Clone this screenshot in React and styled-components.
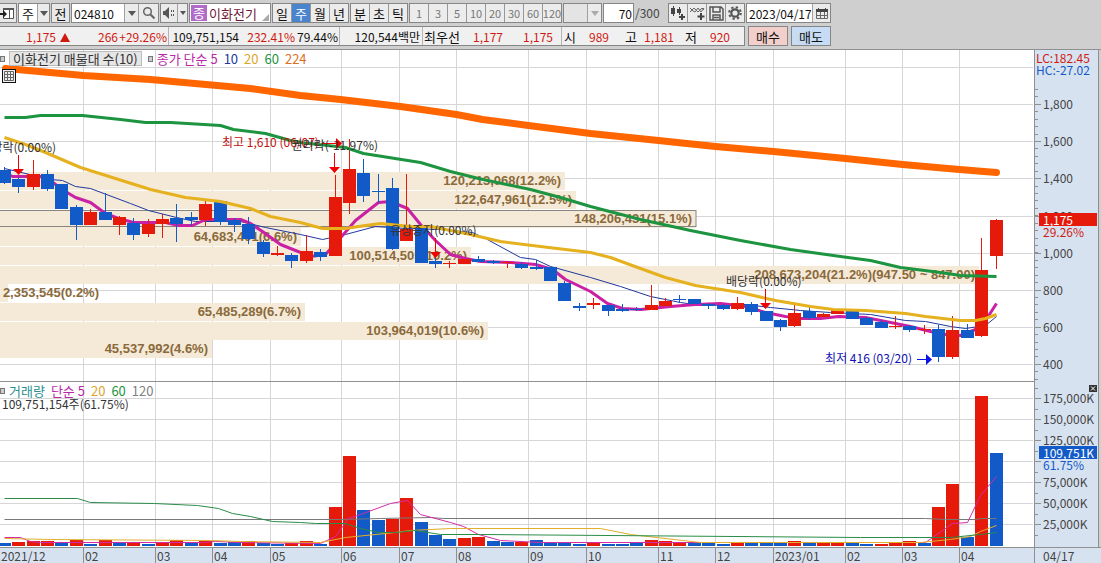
import styled, { createGlobalStyle } from "styled-components";

const RED = "#e61a0a";
const BLUE = "#125ac8";

// one entry per week: [high, body top, body bottom, low, up?]
const candles = [
  [167, 170, 183, 184, 0], [177, 179, 187, 193, 0], [160, 174, 187, 190, 1], [170, 174, 189, 191, 0],
  [184, 184, 209, 209, 0], [205, 207, 225, 240, 0], [209, 212, 225, 225, 1], [193, 212, 220, 220, 0],
  [216, 217, 225, 235, 1], [218, 223, 235, 240, 0], [219, 224, 234, 237, 1], [214, 219, 224, 238, 1],
  [204, 218, 224, 242, 0], [212, 217, 220, 226, 0], [200, 204, 220, 226, 1], [201, 201, 222, 225, 0],
  [218, 220, 225, 232, 0], [217, 224, 239, 244, 0], [240, 242, 254, 257, 0], [246, 253, 255, 256, 1],
  [253, 255, 261, 268, 0], [235, 251, 261, 263, 1], [249, 252, 257, 261, 0], [175, 197, 256, 256, 1],
  [139, 169, 203, 214, 1], [159, 173, 196, 202, 0], [174, 191, 192, 203, 0], [178, 188, 249, 250, 0],
  [174, 229, 241, 241, 1], [228, 228, 263, 263, 0], [250, 261, 264, 268, 0], [261, 263, 264, 268, 1],
  [259, 259, 264, 264, 1], [256, 259, 262, 262, 0], [260, 261, 263, 264, 0], [261, 262, 263, 268, 1],
  [262, 264, 268, 269, 0], [260, 267, 269, 270, 0], [267, 267, 281, 281, 0], [281, 283, 301, 301, 0],
  [303, 306, 308, 311, 0], [298, 303, 305, 309, 1], [305, 305, 311, 316, 0], [304, 309, 311, 312, 0],
  [307, 309, 310, 311, 0], [285, 305, 310, 310, 1], [298, 301, 306, 306, 1], [295, 299, 300, 303, 0],
  [299, 299, 304, 304, 0], [303, 304, 306, 309, 0], [304, 305, 309, 310, 0], [297, 303, 309, 310, 1],
  [302, 304, 312, 315, 0], [311, 311, 321, 321, 0], [319, 320, 327, 331, 0], [304, 313, 326, 327, 1],
  [305, 311, 318, 320, 0], [313, 314, 317, 317, 1], [310, 310, 314, 314, 1], [310, 310, 319, 319, 0],
  [317, 318, 325, 325, 0], [320, 322, 328, 328, 0], [316, 326, 327, 329, 1], [325, 326, 330, 332, 0],
  [325, 329, 330, 334, 1], [325, 329, 357, 362, 0], [316, 330, 357, 359, 1], [324, 330, 338, 338, 0],
  [238, 270, 336, 337, 1], [219, 220, 256, 269, 1],
];

// [bar top, up?]
const volumes = [
  [543, 0], [542, 1], [541, 1], [541, 1], [543, 0], [540, 1], [544, 0], [540, 1], [543, 0], [542, 1],
  [544, 0], [543, 1], [540, 1], [543, 0], [541, 1], [543, 0], [542, 0], [541, 1], [543, 0], [544, 0],
  [543, 1], [541, 1], [544, 0], [507, 1], [456, 1], [510, 0], [520, 0], [519, 1], [498, 1], [522, 0],
  [535, 0], [539, 0], [538, 1], [537, 1], [541, 0], [542, 0], [542, 1], [540, 0], [543, 0], [543, 0],
  [544, 0], [543, 1], [544, 0], [544, 0], [543, 0], [540, 1], [541, 1], [542, 1], [543, 0], [543, 0],
  [544, 0], [542, 1], [543, 0], [543, 0], [543, 0], [541, 1], [543, 0], [543, 1], [542, 1], [543, 0],
  [544, 0], [544, 1], [543, 1], [541, 1], [543, 0], [507, 1], [484, 1], [537, 0], [396, 1], [453, 0],
];

const priceLines = [
  { color: "#ff6600", width: 7, points: "5,68 83,75 150,79 250,88 300,95 340,99 400,106 456,114 482,119 528,125 590,133 658,140 715,146 773,151 845,158 902,164 959,169 996,172" },
  { color: "#2038a0", width: 1, points: "4,168 50,179 62,180 75,186 90,188 130,203 148,210 176,217 195,221 240,221 265,227 300,234 322,239 345,234 375,226 405,228 440,229 472,232 485,238 520,257 535,259 550,266 590,277 620,286 650,296 680,302 700,305 745,304 770,307 800,310 830,312 870,314 905,320 925,321 950,326 965,328 985,325 996,316" },
  { color: "#c920a4", width: 3, points: "4,172 12,176 40,176 50,180 60,188 75,197 90,202 105,213 118,218 133,222 165,222 178,225 192,225 205,219 240,219 250,223 262,231 280,244 295,250 310,256 325,254 342,235 355,220 378,202 390,201 407,208 420,224 435,240 450,254 465,258 480,261 510,262 535,264 552,269 565,279 590,291 607,303 622,308 640,309 670,306 695,304 720,303 745,306 765,312 785,316 800,318 820,318 838,316 865,317 885,321 910,326 930,331 945,334 960,335 975,329 985,320 996,303" },
  { color: "#e6b11e", width: 3, points: "4,137 25,144 45,152 80,167 115,178 150,189 185,197 220,201 250,208 270,216 300,222 322,228 345,228 365,225 380,223 410,226 430,226 470,234 500,241 540,246 590,252 610,257 640,268 665,277 695,285 740,292 775,300 810,306 833,309 865,310 905,313 925,316 960,320 975,320 985,318 996,314" },
  { color: "#1c9440", width: 3, points: "4,117 25,117 40,115 82,115 120,119 145,122 170,122 220,125 233,129 265,133 290,140 300,142 345,147 363,153 420,162 450,171 478,178 530,189 560,197 590,206 640,219 690,230 740,240 790,249 840,256 870,260 900,267 940,272 960,275 996,276" },
];

const volumeLines = [
  { color: "#787878", points: "4,519 340,519 380,518 430,517 443,518 925,518 945,519 975,519 980,518 996,518" },
  { color: "#d42ca8", points: "4,537 20,537 30,541 40,542 200,542 215,541 240,542 320,543 335,536 348,518 360,514 390,503 407,500 420,514 450,522 463,526 478,534 500,540 540,542 925,542 952,523 967,522 980,495 996,476" },
  { color: "#e2ae2c", points: "4,538 50,539 210,540 240,541 320,542 345,537 395,532 410,530 450,528 600,528 630,534 700,542 920,542 950,539 970,536 980,531 996,525" },
  { color: "#2a8c48", points: "4,498 77,498 90,502 154,503 197,505 218,508 232,513 250,516 272,521 300,522 315,523 345,523 360,528 378,532 395,532 415,530 440,534 480,534 860,537 950,537 980,534 996,532" },
];

const profile = [
  { y: 172, w: 565, text: "120,213,068(12.2%)" },
  { y: 191, w: 576, text: "122,647,961(12.5%)" },
  { y: 210, w: 696, text: "148,206,431(15.1%)", current: true },
  { y: 228, w: 301, text: "64,683,401(6.6%)" },
  { y: 247, w: 471, text: "100,514,505(10.2%)" },
  { y: 266, w: 979, text: "208,673,204(21.2%)(947.50 ~ 847.00)" },
  { y: 284, w: 8, text: "2,353,545(0.2%)" },
  { y: 303, w: 305, text: "65,485,289(6.7%)" },
  { y: 322, w: 488, text: "103,964,019(10.6%)" },
  { y: 340, w: 212, text: "45,537,992(4.6%)" },
];

const months = [
  ["2021/12", 83], ["02", 72], ["03", 57], ["04", 58], ["05", 71], ["06", 58], ["07", 57], ["08", 72],
  ["09", 58], ["10", 72], ["11", 57], ["12", 58], ["2023/01", 72], ["02", 57], ["03", 57], ["04", 75],
];
const gridX = [83, 155, 212, 270, 341, 399, 456, 528, 586, 658, 715, 773, 845, 902, 959];
const priceTicks = [[104, "1,800"], [141, "1,600"], [178, "1,400"], [216, "1,200"], [253, "1,000"], [290, "800"], [327, "600"], [364, "400"]];
const volumeTicks = [[398, "175,000K"], [419, "150,000K"], [440, "125,000K"], [461, ""], [482, "75,000K"], [503, "50,000K"], [524, "25,000K"]];

const centerX = (i) => Math.round(4 + i * 14.37);

const Line = ({ color, width = 1, points }) => (
  <polyline
    points={points}
    fill="none"
    stroke={color}
    strokeWidth={width}
    strokeLinejoin="round"
    strokeLinecap={width > 3 ? "round" : "butt"}
    transform="translate(0.5 0.5)"
  />
);

const Grid = ({ top, bottom, rows }) => (
  <g fill="#d6d6d9">
    {rows.map((y) => <rect key={y} x="0" y={y} width="1033" height="1" />)}
    {gridX.map((x) => <rect key={x} x={x} y={top} width="1" height={bottom - top} />)}
  </g>
);

const DownArrow = ({ x, y, from }) => (
  <g fill="#f00000">
    <rect x={x} y={from} width="1" height={y - from} />
    <path d={`M${x - 5} ${y - 5}h11l-5.500 6z`} />
  </g>
);

const PriceChart = () => (
  <ChartSvg viewBox="0 50 1034 331" role="img" aria-label="이화전기 주봉">
    <Grid top={50} bottom={381} rows={[67, ...priceTicks.map((t) => t[0])]} />
    {profile.map((bar) => (
      <g key={bar.y}>
        <rect x="0" y={bar.y} width={bar.w} height="18" fill="#f5e9d8" />
        {bar.current && <rect x="-2" y={bar.y + 0.5} width={bar.w + 2} height="16" fill="none" stroke="#8a867f" />}
      </g>
    ))}
    {profile.map((bar) => (
      <ProfileText key={bar.y} x={bar.w < 20 ? 99 : bar.w - 4} y={bar.y + 13} textAnchor="end">{bar.text}</ProfileText>
    ))}
    {priceLines.slice(0, 3).map((l) => <Line key={l.color} {...l} />)}
    {candles.map(([high, top, bottom, low, up], i) => (
      <g key={i} fill={up ? RED : BLUE}>
        <rect x={centerX(i)} y={high} width="1" height={low - high} />
        <rect x={centerX(i) - 6} y={top} width="13" height={bottom - top} />
      </g>
    ))}
    {priceLines.slice(3).map((l) => <Line key={l.color} {...l} />)}
    <DownArrow x={18} y={174} from={155} />
    <DownArrow x={334} y={172} from={153} />
    <DownArrow x={435} y={257} from={238} />
    <DownArrow x={765} y={308} from={289} />
    <g fill="#f00000"><rect x="322" y="143" width="15" height="1" /><path d="M336 138v11l6-5.500z" /></g>
    <g fill="#0a14e6"><rect x="917" y="359" width="14" height="1" /><path d="M926 354v11l6-5.500z" /></g>
    <ChartText x="56" y="152" textAnchor="end">배당락(0.00%)</ChartText>
    <ChartText x="222" y="147" $color="#c01010">최고 1,610 (06/07)</ChartText>
    <ChartText x="378" y="150" textAnchor="end">권리락(-11.97%)</ChartText>
    <ChartText x="390" y="235">유상증자(0.00%)</ChartText>
    <ChartText x="726" y="286">배당락(0.00%)</ChartText>
    <ChartText x="912" y="363" textAnchor="end" $color="#1010b4">최저 416 (03/20)</ChartText>
  </ChartSvg>
);

const VolumeChart = () => (
  <ChartSvg viewBox="0 381 1034 166" role="img" aria-label="거래량">
    <Grid top={381} bottom={546} rows={volumeTicks.map((t) => t[0])} />
    {volumes.map(([top, up], i) => (
      <rect key={i} x={centerX(i) - 6} y={top} width="13" height={546 - top} fill={up ? RED : BLUE} />
    ))}
    {volumeLines.map((l) => <Line key={l.color} {...l} />)}
    <rect x="0" y="381" width="1034" height="1" fill="#909090" />
  </ChartSvg>
);

const Scale = ({ top, height, ticks, minor, children }) => (
  <Axis>
    <Ticks viewBox={`0 ${top} 66 ${height}`} preserveAspectRatio="none">
      {minor.map((y) => <rect key={y} x="0" y={y} width="3" height="1" />)}
      {ticks.map(([y]) => <rect key={y} x="0" y={y} width="6" height="1" />)}
    </Ticks>
    {ticks.map(([y, label]) => (
      <AxisLabel key={y} style={{ top: `${((y - top) / height) * 100}%` }}>{label}</AxisLabel>
    ))}
    {children}
  </Axis>
);

const range = (from, to, step) => {
  const out = [];
  for (let v = from; v < to; v += step) out.push(Math.round(v));
  return out;
};

const Caret = () => (
  <svg width="8" height="5" viewBox="0 0 8 5" aria-hidden="true"><path d="M0 0h8L4 5z" fill="currentColor" /></svg>
);

const App = () => (
  <>
    <GlobalStyle />
    <Page>
      <Header>
        <Toolbar>
          <Tool $w={17} $first aria-label="패널">
            <svg width="16" height="16" viewBox="0 0 16 16"><path d="M3.500 3.500h10v10h-10z" fill="#fff" stroke="#555" /><path d="M3 3h11v2H3zM9 5h1v8H9z" fill="#555" /><path d="M0 8h3V5l4 4-4 4v-3H0z" fill="#222" /></svg>
          </Tool>
          <Combo $w={32}>
            <Select aria-label="구분"><option>주</option></Select>
            <Arrow $w={12}><Caret /></Arrow>
          </Combo>
          <Tool $w={19}>전</Tool>
          <Combo $w={88}>
            <Input aria-label="종목코드" defaultValue="024810" />
            <Arrow as="button" $w={14} aria-label="종목 목록"><Caret /></Arrow>
            <Arrow as="button" $w={20} aria-label="검색">
              <svg width="14" height="14" viewBox="0 0 14 14" fill="none" stroke="#666"><circle cx="5.500" cy="5.500" r="3.800" strokeWidth="1.500" /><path d="M8.500 8.500l4 4" strokeWidth="2.200" /></svg>
            </Arrow>
          </Combo>
          <Combo $w={28}>
            <Arrow as="button" $w={16} $first aria-label="소리">
              <svg width="14" height="12" viewBox="0 0 14 12" fill="#555"><path d="M1 4h2l4-4v12L3 8H1zM9 3h1v2H9zM9 7h1v2H9zM11 3h1v2h-1zM11 7h1v2h-1z" /></svg>
            </Arrow>
            <Arrow as="button" $w={10} aria-label="소리 설정">
              <svg width="6" height="4" viewBox="0 0 6 4"><path d="M0 0h6L3 4z" fill="#555" /></svg>
            </Arrow>
          </Combo>
          <Stock>
            <StockBadge>종</StockBadge>이화전기
            <svg width="7" height="7" viewBox="0 0 7 7"><path d="M7 0v7H0z" fill="#aaa" /></svg>
          </Stock>
          <Segments $w={77}>
            {["일", "주", "월", "년"].map((t) => <Segment key={t} $active={t === "주"}>{t}</Segment>)}
          </Segments>
          <Segments $w={58}>
            {["분", "초", "틱"].map((t) => <Segment key={t}>{t}</Segment>)}
          </Segments>
          <Segments $w={153}>
            {["1", "3", "5", "10", "20", "30", "60", "120"].map((t) => <Segment key={t} $muted>{t}</Segment>)}
          </Segments>
          <Combo $w={39} $off>
            <Select aria-label="주기" disabled><option></option></Select>
            <Arrow $w={14} $off><Caret /></Arrow>
          </Combo>
          <Combo $w={31}><Input aria-label="봉 개수" defaultValue="70" $right /></Combo>
          <Total>/300</Total>
          <Segments $w={77}>
            <Segment aria-label="차트 추가">
              <svg width="16" height="16" viewBox="0 0 16 16" fill="#444"><path d="M1 3h4v6H1zM3 1h1v10H3zM7 4h4v4H7zM9 2h1v8H9zM12 9h1v2h2v2h-2v2h-2v-2H9v-2h2V9z" /></svg>
            </Segment>
            <Segment aria-label="지표 추가">
              <svg width="16" height="16" viewBox="0 0 16 16" fill="none" stroke="#666"><path d="M1 7l4-4 4 4 4-4 2 2M1 3l3 3 2 1 3-4 3 4 3-4" /><path d="M12 8v7M8.500 11.500h7" stroke="#444" strokeWidth="2" /></svg>
            </Segment>
            <Segment aria-label="저장">
              <svg width="15" height="15" viewBox="0 0 15 15" fill="none" stroke="#555" strokeWidth="1.500"><path d="M1 1h11l2 2v11H1zM4 1v5h7V1M4 14V9h7v5M5 11.500h5" /></svg>
            </Segment>
            <Segment aria-label="설정">
              <svg width="14" height="14" viewBox="0 0 14 14" fill="none" stroke="#555"><circle cx="7" cy="7" r="3.700" strokeWidth="2.200" /><circle cx="7" cy="7" r="5.800" strokeWidth="2" strokeDasharray="2.300 2.260" /></svg>
            </Segment>
          </Segments>
          <Combo $w={85}>
            <Input aria-label="날짜" defaultValue="2023/04/17" />
            <Arrow as="button" $w={18} aria-label="달력">
              <svg width="12" height="11" viewBox="0 0 12 11"><path d="M.5 1.500h11v9H.5zM.5 7.500h11M4.500 4v7M8.500 4v7" fill="none" stroke="#666" /><path d="M0 1h12v3H0zM2 0h1v2H2zM9 0h1v2H9z" fill="#444" /></svg>
            </Arrow>
          </Combo>
        </Toolbar>
        <QuoteRow>
          <Quotes>
            <Cell $w={168}>
              <Num $w={56} $up>1,175</Num>
              <Num $w={14} $up><svg width="10" height="9" viewBox="0 0 10 9"><path d="M5 0l5 9H0z" fill="#d01a10" /></svg></Num>
              <Num $w={48} $up>266</Num>
              <Num $w={49} $up>+29.26%</Num>
            </Cell>
            <Cell $w={171}>
              <Num $w={70}>109,751,154</Num>
              <Num $w={56} $up>232.41%</Num>
              <Num $w={43}>79.44%</Num>
            </Cell>
            <Cell $w={83}><Num $w={80}>120,544백만</Num></Cell>
            <Cell $w={139}>
              <Label $w={37}>최우선</Label>
              <Num $w={43} $up>1,177</Num>
              <Num $w={50} $up>1,175</Num>
            </Cell>
            <Cell $w={183}>
              <Label $w={14}>시</Label><Num $w={33} $up>989</Num>
              <Label $w={28}>고</Label><Num $w={37} $up>1,181</Num>
              <Label $w={23}>저</Label><Num $w={33} $up>920</Num>
            </Cell>
          </Quotes>
          <Order $bg="#f2cfca">매수</Order>
          <Order $bg="#c5dcf4">매도</Order>
        </QuoteRow>
      </Header>

      <Panel>
        <Plot>
          <PriceChart />
          <Legend>
            <Mark />
            <LegendTitle>이화전기 매물대 수(10)</LegendTitle>
            <Mark />
            <Key $color="#b828a8">종가 단순 5</Key>
            <Key $color="#2038a0">10</Key>
            <Key $color="#dba52a">20</Key>
            <Key $color="#1c9440">60</Key>
            <Key $color="#dc6e1e">224</Key>
          </Legend>
          <TableButton aria-label="표 보기">
            <svg width="10" height="10" viewBox="0 0 10 10" fill="none" stroke="#666"><path d="M.5.5h9v9h-9zM.5 3.500h9M.5 6.500h9M3.500 1v9M6.500 1v9" /></svg>
          </TableButton>
        </Plot>
        <Scale top={50} height={331} ticks={priceTicks} minor={range(89, 381, 7.43)}>
          <Extremes><Key $color="#d01a10">LC:182.45</Key><Key $color={BLUE}>HC:-27.02</Key></Extremes>
          <Tag $bg={RED} style={{ top: `${(163 / 331) * 100}%` }}>1,175</Tag>
          <AxisLabel $color="#d01a10" style={{ top: `${(182 / 331) * 100}%` }}>29.26%</AxisLabel>
        </Scale>
      </Panel>

      <Panel>
        <Plot>
          <VolumeChart />
          <Legend $lower>
            <Mark />
            <Key $color="#2a9090">거래량</Key>
            <Key $color="#b828a8">단순 5</Key>
            <Key $color="#dba52a">20</Key>
            <Key $color="#1c9440">60</Key>
            <Key $color="#808080">120</Key>
          </Legend>
          <VolumeNow>109,751,154주(61.75%)</VolumeNow>
        </Plot>
        <Scale top={381} height={166} ticks={volumeTicks} minor={range(388, 547, 21)}>
          <Close aria-label="닫기">
            <svg width="8" height="7" viewBox="0 0 8 7"><path d="M2 1.500l4 4M6 1.500l-4 4" stroke="#fff" /></svg>
          </Close>
          <Tag $bg={BLUE} style={{ top: `${(65 / 166) * 100}%` }}>109,751K</Tag>
          <AxisLabel $color={BLUE} style={{ top: `${(84 / 166) * 100}%` }}>61.75%</AxisLabel>
        </Scale>
      </Panel>

      <DateRow>
        <Months>
          {months.map(([label], i) => <Month key={i}>{label}</Month>)}
        </Months>
        <LastDate>04/17</LastDate>
      </DateRow>
    </Page>
  </>
);

const GlobalStyle = createGlobalStyle`
  * {
    box-sizing: border-box;
  }
  body {
    margin: 0;
    background-color: #cfcfcf;
  }
  body, button, input, select {
    font-family: "Noto Sans CJK KR", sans-serif;
    font-size: 13px;
    color: #111;
  }
  button, input, select {
    margin: 0;
    padding: 0;
    border: 0;
    border-radius: 0;
    appearance: none;
  }
`;

const Page = styled.div`
  width: 100%;
  overflow: hidden;
`;

const Header = styled.header`
  height: 50px;
  padding-top: 3px;
  background-color: #cfcfcf;
  border-bottom: 1px solid #909090;
`;

const Toolbar = styled.div`
  display: flex;
  gap: 1px;
  height: 20px;
  white-space: nowrap;
`;

const Tool = styled.button`
  flex: 0 0 ${({ $w }) => $w}px;
  display: flex;
  align-items: center;
  justify-content: center;
  background-color: #e8e8e8;
  border: 1px solid #868686;
  ${({ $first }) => $first && "border-left: 0;"}
`;

const Combo = styled.div`
  flex: 0 0 ${({ $w }) => $w}px;
  min-width: 0;
  display: flex;
  border: 1px solid #868686;
  background-color: ${({ $off }) => ($off ? "#e4e4e4" : "#fff")};
`;

const Select = styled.select`
  flex: 1;
  min-width: 0;
  padding-left: 3px;
  background-color: transparent;
`;

const Input = styled.input`
  flex: 1;
  width: 0;
  min-width: 0;
  padding: 0 1px 0 2px;
  background-color: transparent;
  font-size: 12px;
  text-align: ${({ $right }) => ($right ? "right" : "left")};
`;

const Arrow = styled.span`
  flex: 0 0 ${({ $w }) => $w}px;
  display: flex;
  align-items: center;
  justify-content: center;
  background-color: #ebebeb;
  color: ${({ $off }) => ($off ? "#aaa" : "#555")};
  && {
    border-left: ${({ $first }) => ($first ? "0" : "1px solid #a0a0a0")};
  }
`;

const Stock = styled.div`
  flex: 0 0 82px;
  display: flex;
  align-items: center;
  gap: 2px;
  padding: 1px;
  background-color: #fff;
  border: 1px solid #868686;
  color: #701838;
  svg {
    margin-left: auto;
    align-self: flex-end;
  }
`;

const StockBadge = styled.span`
  width: 16px;
  height: 16px;
  line-height: 16px;
  text-align: center;
  background-color: #b06cc8;
  color: #fff;
`;

const Segments = styled.div`
  flex: 0 0 ${({ $w }) => $w}px;
  display: flex;
  border: 1px solid #868686;
`;

const Segment = styled.button`
  flex: 1 1 0;
  display: flex;
  align-items: center;
  justify-content: center;
  min-width: 0;
  font-size: ${({ $muted }) => ($muted ? 11 : 13)}px;
  background-color: ${({ $active }) => ($active ? "#4a84cc" : "#ececec")};
  color: ${({ $active, $muted }) => ($active ? "#fff" : $muted ? "#777" : "#111")};
  & + & {
    border-left: 1px solid #989898;
  }
`;

const Total = styled.span`
  flex: 0 0 32px;
  line-height: 20px;
  font-size: 12px;
  color: #444;
`;

const QuoteRow = styled.div`
  display: flex;
  gap: 3px;
  height: 20px;
  margin-top: 3px;
`;

const Quotes = styled.div`
  flex: 0 0 745px;
  display: flex;
  background-color: #f0f0f0;
  border: 1px solid #868686;
  border-left: 0;
`;

const Cell = styled.div`
  flex: 0 0 ${({ $w }) => $w}px;
  display: flex;
  align-items: center;
  & + & {
    border-left: 1px solid #b4b4b4;
  }
`;

const Num = styled.span`
  width: ${({ $w }) => $w}px;
  text-align: right;
  white-space: nowrap;
  font-size: 12px;
  color: ${({ $up }) => ($up ? "#d01a10" : "#111")};
`;

const Label = styled(Num)`
  font-size: 13px;
`;

const Order = styled.button`
  flex: 0 0 40px;
  border: 1px solid #868686;
  background-color: ${({ $bg }) => $bg};
`;

const Panel = styled.section`
  display: grid;
  grid-template-columns: 1fr 67px;
`;

const Plot = styled.div`
  position: relative;
  min-width: 0;
  background-color: #fff;
`;

const ChartSvg = styled.svg`
  display: block;
  width: 100%;
  height: auto;
`;

const ChartText = styled.text`
  fill: ${({ $color }) => $color || "#333"};
  font-size: 12px;
`;

const ProfileText = styled.text`
  fill: #8a6a3a;
  font-family: "Liberation Sans", sans-serif;
  font-size: 13px;
  font-weight: bold;
`;

const Legend = styled.div`
  position: absolute;
  top: ${({ $lower }) => ($lower ? 2 : 1)}px;
  left: 0;
  display: flex;
  align-items: center;
  gap: 6px;
  height: 15px;
  line-height: 15px;
`;

const Mark = styled.i`
  width: 5px;
  height: 6px;
  margin-right: -2px;
  border: 1px solid #777;
  background-color: #ccc;
`;

const LegendTitle = styled.button`
  height: 15px;
  padding: 0 3px;
  line-height: 13px;
  border: 1px solid #bbb;
  background-color: #e6e6e6;
  color: #333;
`;

const Key = styled.span`
  color: ${({ $color }) => $color};
  white-space: nowrap;
`;

const TableButton = styled.button`
  position: absolute;
  top: 19px;
  left: 2px;
  width: 14px;
  height: 14px;
  display: flex;
  align-items: center;
  justify-content: center;
  border: 1px solid #111;
  background-color: #eee;
`;

const VolumeNow = styled.span`
  position: absolute;
  top: 15px;
  left: 2px;
  line-height: 15px;
  font-size: 12px;
  color: #333;
`;

const Axis = styled.div`
  position: relative;
  font-size: 12px;
  background-color: #d7e2f0;
  border-left: 1px solid #909090;
  border-right: 2px solid #cfcfcf;
  box-shadow: inset -1px 0 #909090;
`;

const Ticks = styled.svg`
  position: absolute;
  inset: 0;
  width: 66px;
  height: 100%;
  fill: #909090;
`;

const AxisLabel = styled.span`
  position: absolute;
  left: 8px;
  line-height: 14px;
  margin-top: -7px;
  color: ${({ $color }) => $color || "#444"};
`;

const Tag = styled.span`
  position: absolute;
  left: 4px;
  right: 2px;
  padding-left: 4px;
  line-height: 13px;
  background-color: ${({ $bg }) => $bg};
  color: #fff;
`;

const Extremes = styled.div`
  position: absolute;
  top: 2px;
  left: 1px;
  display: flex;
  flex-direction: column;
  line-height: 12px;
`;

const Close = styled.button`
  position: absolute;
  top: 4px;
  right: 2px;
  width: 8px;
  height: 7px;
  display: flex;
  background-color: #333;
`;

const DateRow = styled.footer`
  display: grid;
  grid-template-columns: 1fr 67px;
  height: 16px;
  line-height: 15px;
  font-size: 12px;
  background-color: #d7e2f0;
  border-top: 1px solid #909090;
  color: #444;
`;

const Months = styled.div`
  display: grid;
  grid-template-columns: ${months.map(([, w]) => `minmax(0, ${w}fr)`).join(" ")};
`;

const Month = styled.span`
  padding-left: 1px;
  & + & {
    border-left: 1px solid #909090;
  }
`;

const LastDate = styled.span`
  padding-left: 8px;
  border-left: 1px solid #909090;
`;

export default App;
